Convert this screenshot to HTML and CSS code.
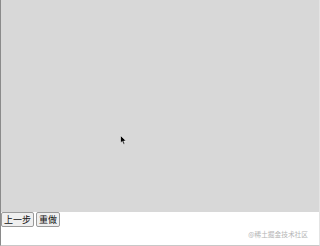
FILE: index.html
```html
<!DOCTYPE html>
<html lang="zh">
<head>
<meta charset="utf-8">
<link rel="stylesheet" href="styles.css">
</head>
<body>
<div class="frame">
  <div class="board">
    <svg class="cursor" width="8" height="11" viewBox="0 0 8 11"><path d="M0.5 0.5 L0.5 8 L2.3 6.4 L3.6 9.6 L4.9 9 L3.7 6 L6.2 6 Z" fill="#000" stroke="#fff" stroke-width="0.6"/></svg>
  </div>
  <div class="toolbar">
    <button class="btn">上一步</button>
    <button class="btn">重做</button>
  </div>
  <div class="watermark">@稀土掘金技术社区</div>
</div>
</body>
</html>
```
FILE: styles.css
```css
html, body {
  margin: 0;
  padding: 0;
  background: #ffffff;
}
.frame {
  position: relative;
  width: 320px;
  height: 246px;
  box-sizing: border-box;
  border-left: 1px solid #8a8a8a;
  border-right: 1px solid #e4e4e4;
  border-bottom: 1px solid #c8c8c8;
  font-family: "Noto Sans CJK SC", "Liberation Sans", sans-serif;
}
.board {
  position: relative;
  height: 212px;
  background: #d8d8d8;
}
.cursor {
  position: absolute;
  left: 119px;
  top: 135px;
}
.toolbar {
  display: flex;
  gap: 2px;
}
.btn {
  margin: 0;
  height: 15px;
  padding: 0 2px;
  font-family: "Noto Sans CJK SC", sans-serif;
  font-size: 9px;
  line-height: 13px;
  color: #111;
  background: #efefef;
  border: 1px solid #9a9a9a;
  border-radius: 2px;
}
.watermark {
  position: absolute;
  right: 11px;
  bottom: 6px;
  font-size: 6.7px;
  color: #b4b4b4;
  line-height: 9px;
}
```
